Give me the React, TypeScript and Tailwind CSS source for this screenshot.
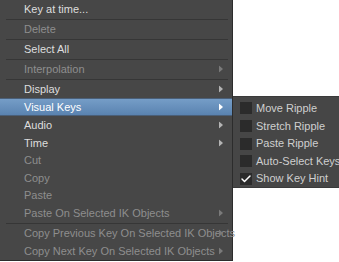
import { Check } from 'lucide-react'

type Item = { label: string; disabled?: boolean; sub?: boolean; active?: boolean; h?: string; sepAfter?: boolean }

const items: Item[] = [
  { label: 'Key at time...', sepAfter: true },
  { label: 'Delete', disabled: true, sepAfter: true },
  { label: 'Select All', sepAfter: true },
  { label: 'Interpolation', disabled: true, sub: true, sepAfter: true },
  { label: 'Display', sub: true },
  { label: 'Visual Keys', sub: true, active: true },
  { label: 'Audio', sub: true },
  { label: 'Time', sub: true },
  { label: 'Cut', disabled: true, h: 'h-[17px]' },
  { label: 'Copy', disabled: true },
  { label: 'Paste', disabled: true, h: 'h-[17px]' },
  { label: 'Paste On Selected IK Objects', disabled: true, sub: true, sepAfter: true },
  { label: 'Copy Previous Key On Selected IK Objects', disabled: true, sub: true },
  { label: 'Copy Next Key On Selected IK Objects', disabled: true, sub: true },
]

const subItems = [
  { label: 'Move Ripple', h: 'h-[18px]' },
  { label: 'Stretch Ripple', h: 'h-[18px]' },
  { label: 'Paste Ripple', h: 'h-[17px]' },
  { label: 'Auto-Select Keys', h: 'h-[18px]' },
  { label: 'Show Key Hint', h: 'h-[17px]', checked: true },
]

function Arrow({ tone }: { tone: string }) {
  return (
    <svg width="4" height="7" viewBox="0 0 4 7" className="absolute right-[9px] top-1/2 -translate-y-1/2">
      <path d="M0 0 L4 3.5 L0 7 Z" fill={tone} />
    </svg>
  )
}

function Row({ item }: { item: Item }) {
  const text = item.active ? 'text-white' : item.disabled ? 'text-[#8e8e8e]' : 'text-[#dedede]'
  const bg = item.active ? 'bg-[linear-gradient(180deg,#759dc7,#5a83b0)] border-y border-[#4a5f78]' : ''
  return (
    <div className={`relative flex items-center pl-[24px] ${item.h ?? 'h-[18px]'} ${bg} ${text}`}>
      <span className="whitespace-nowrap">{item.label}</span>
      {item.sub && <Arrow tone={item.active ? '#ffffff' : item.disabled ? '#7a7a7a' : '#b4b4b4'} />}
    </div>
  )
}

export default function App() {
  return (
    <div className="flex h-[262px] w-[339px] items-start overflow-hidden bg-white text-[11px] font-['Liberation_Sans',Arial,sans-serif]">
      <div className="h-[261px] w-[233px] shrink-0 border-b border-r border-[#2c2c2c] bg-[#474747]">
        {items.map((item) => (
          <div key={item.label}>
            <Row item={item} />
            {item.sepAfter && <div className="ml-[6px] mr-[4px] h-[2px] border-b border-[#363636]" />}
          </div>
        ))}
      </div>
      <div className="mt-[96px] h-[92px] w-[110px] shrink-0 border-t border-b border-[#3a3a3a] bg-[#464646] pt-[2px]">
        {subItems.map((s) => (
          <div key={s.label} className={`flex items-center ${s.h}`}>
            <div className="ml-[7px] flex h-[12px] w-[12px] items-center justify-center bg-[#2b2b2b]">
              {s.checked && <Check className="h-[12px] w-[12px] text-white" strokeWidth={3} />}
            </div>
            <span className="ml-[4px] whitespace-nowrap text-[#cfcfcf]">{s.label}</span>
          </div>
        ))}
      </div>
    </div>
  )
}
